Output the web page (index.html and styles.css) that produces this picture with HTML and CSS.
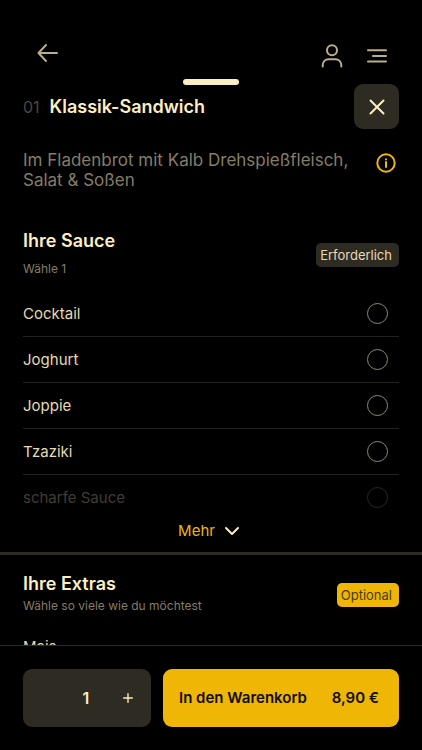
FILE: index.html
```html
<!DOCTYPE html>
<html lang="de">
<head>
<meta charset="utf-8">
<meta name="viewport" content="width=device-width, initial-scale=1">
<title>Klassik-Sandwich</title>
<link rel="stylesheet" href="styles.css">
</head>
<body>
<div class="content">
  <header class="topbar">
    <button class="icon-button back" type="button" aria-label="Zurück">
      <svg width="22" height="20" viewBox="0 0 22 20"><path d="M20 10H1.500M9 2L1.500 10L9 18"/></svg>
    </button>
    <button class="icon-button" type="button" aria-label="Konto">
      <svg width="22" height="24" viewBox="0 0 22 24"><circle cx="11" cy="6.300" r="5"/><path d="M1.700 22.500V21A5.800 5.800 0 0 1 7.500 15.200H14.500A5.800 5.800 0 0 1 20.300 21V22.500"/></svg>
    </button>
    <button class="icon-button" type="button" aria-label="Menü">
      <svg width="22" height="16" viewBox="0 0 22 16"><path d="M2 2.300H20M7 7.900H20M2 13.600H20"/></svg>
    </button>
  </header>

  <main class="sheet">
    <span class="handle"></span>
    <div class="product-head">
      <span class="number">01</span>
      <h1 class="title">Klassik-Sandwich</h1>
      <button class="close" type="button" aria-label="Schließen">
        <svg width="16" height="16" viewBox="0 0 16 16"><path d="M1.500 1.500L14.500 14.500M14.500 1.500L1.500 14.500"/></svg>
      </button>
    </div>
    <div class="product-info">
      <p class="description">Im Fladenbrot mit Kalb Drehspießfleisch, Salat &amp; Soßen</p>
      <button class="icon-button info" type="button" aria-label="Informationen">
        <svg width="20" height="20" viewBox="0 0 20 20"><circle cx="10" cy="10" r="8.700"/><path d="M10 9V14"/><circle class="dot" cx="10" cy="6.300" r="1.100"/></svg>
      </button>
    </div>

    <section class="group sauces">
      <div class="group-head">
        <div class="group-text">
          <h2 class="title">Ihre Sauce</h2>
          <p class="hint">Wähle 1</p>
        </div>
        <span class="badge">Erforderlich</span>
      </div>
      <div class="options">
        <label class="option">Cocktail<input type="radio" name="sauce"></label>
        <label class="option">Joghurt<input type="radio" name="sauce"></label>
        <label class="option">Joppie<input type="radio" name="sauce"></label>
        <label class="option">Tzaziki<input type="radio" name="sauce"></label>
        <label class="option faded">scharfe Sauce<input type="radio" name="sauce"></label>
      </div>
      <button class="more" type="button">Mehr
        <svg width="16" height="10" viewBox="0 0 16 10"><path d="M2 2L8 8L14 2"/></svg>
      </button>
    </section>

    <section class="group extras">
      <div class="group-head">
        <div class="group-text">
          <h2 class="title">Ihre Extras</h2>
          <p class="hint">Wähle so viele wie du möchtest</p>
        </div>
        <span class="badge optional">Optional</span>
      </div>
      <div class="options">
        <div class="option">Mais</div>
      </div>
    </section>
  </main>
</div>

<footer class="order-bar">
  <div class="quantity">
    <output class="count">1</output>
    <button class="plus" type="button" aria-label="Mehr">
      <svg width="10" height="10" viewBox="0 0 10 10"><path d="M5 .7V9.300M.7 5H9.300"/></svg>
    </button>
  </div>
  <button class="add" type="button"><span>In den Warenkorb</span><span>8,90 €</span></button>
</footer>
</body>
</html>
```
FILE: styles.css
```css
:root {
  --cream: #fbeec2;
  --text: #e6dab3;
  --muted: #847d67;
  --panel: #2e2b23;
  --line: #23221e;
  --yellow: #efb606;
}

* {
  box-sizing: border-box;
  margin: 0;
}

body {
  display: flex;
  flex-direction: column;
  height: 100vh;
  background: #000;
  color: var(--text);
  font-family: Inter, "Liberation Sans", sans-serif;
  font-size: 15px;
  line-height: 20px;
}

button {
  padding: 0;
  border: 0;
  background: none;
  color: inherit;
  font: inherit;
  cursor: pointer;
}

svg {
  display: block;
  fill: none;
  stroke: currentColor;
  stroke-width: 2;
  stroke-linecap: round;
  stroke-linejoin: round;
}

.content {
  flex: 1;
  min-height: 0;
  overflow: hidden;
}

.topbar {
  display: flex;
  align-items: center;
  gap: 23px;
  height: 79px;
  padding: 32px 34px 0 37px;
}

.icon-button {
  color: #b9ae8d;
}

.back {
  margin: 0 auto 6px 0;
}

.sheet {
  position: relative;
  padding-top: 5px;
}

.handle {
  position: absolute;
  top: 0;
  left: 50%;
  width: 56px;
  height: 6px;
  border-radius: 3px;
  background: var(--cream);
  transform: translateX(-50%);
}

.product-head {
  display: flex;
  align-items: center;
  gap: 10px;
  padding: 0 23px;
}

.number {
  color: #4c483d;
  font-size: 16px;
}

.title {
  color: var(--cream);
  font-size: 18px;
  font-weight: 600;
}

.close {
  display: grid;
  place-items: center;
  width: 45px;
  height: 45px;
  margin-left: auto;
  border-radius: 9px;
  background: var(--panel);
  color: var(--cream);
}

.product-info {
  display: flex;
  justify-content: space-between;
  align-items: flex-start;
  gap: 16px;
  padding: 21px 26px 41px 23px;
}

.description {
  color: var(--muted);
  font-size: 17px;
}

.info {
  margin-top: 3px;
  color: var(--yellow);
}

.dot {
  fill: currentColor;
  stroke: none;
}

.group-head {
  display: flex;
  justify-content: space-between;
  align-items: center;
  padding: 0 23px;
}

.group-text {
  display: grid;
}

.sauces .group-text {
  gap: 8px;
}

.sauces .group-head {
  padding-bottom: 12px;
}

.hint {
  color: var(--muted);
  font-size: 12px;
}

.badge {
  padding: 2px 7px 2px 4px;
  border-radius: 5px;
  background: var(--panel);
  font-size: 13px;
}

.optional {
  background: var(--yellow);
  color: #4a3b0c;
}

.options {
  padding: 0 23px;
}

.option {
  display: flex;
  justify-content: space-between;
  align-items: center;
  height: 46px;
  padding-right: 11px;
  border-bottom: 1px solid var(--line);
}

.option input {
  appearance: none;
  width: 21px;
  height: 21px;
  margin: 0;
  border: 1px solid #8f8871;
  border-radius: 50%;
}

.faded {
  border-bottom-color: transparent;
  color: #403d34;
}

.faded input {
  border-color: #2b2923;
}

.more {
  display: flex;
  justify-content: center;
  align-items: center;
  gap: 9px;
  width: 100%;
  padding-right: 4px;
  color: var(--yellow);
}

.more svg {
  color: var(--cream);
}

.extras {
  margin-top: 11px;
  padding-top: 19px;
  border-top: 3px solid var(--panel);
}

.extras .group-text {
  gap: 2px;
}

.extras .group-head {
  padding-bottom: 8px;
}

.order-bar {
  display: grid;
  grid-template-columns: 128fr 236fr;
  gap: 12px;
  padding: 23px;
  border-top: 1px solid var(--panel);
}

.quantity {
  display: grid;
  grid-template-columns: repeat(3, 1fr);
  align-items: center;
  height: 58px;
  padding-right: 2px;
  border-radius: 9px;
  background: var(--panel);
  color: var(--cream);
}

.count {
  grid-column: 2;
  font-size: 16px;
  font-weight: 600;
  text-align: center;
}

.plus {
  display: grid;
  place-items: center;
  height: 100%;
}

.plus svg {
  stroke-width: 1.400;
}

.add {
  display: flex;
  justify-content: space-between;
  align-items: center;
  padding: 0 20px 0 16px;
  border-radius: 9px;
  background: var(--yellow);
  color: #110d02;
  font-weight: 600;
}
```
